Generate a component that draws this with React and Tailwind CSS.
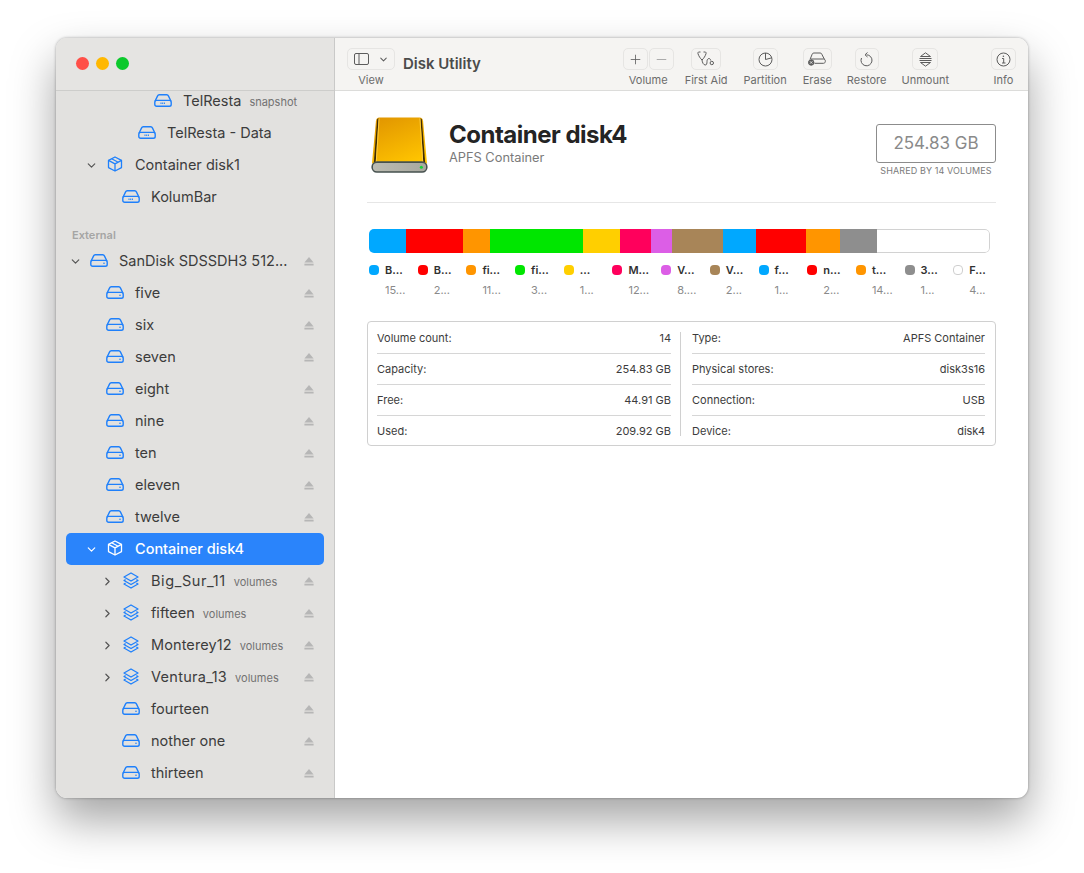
import React from 'react';
import { ChevronDown, ChevronRight, Plus, Minus } from 'lucide-react';

const segments = [
  { width: 'w-[37px]', color: 'bg-[#00a8ff]' },
  { width: 'w-[57px]', color: 'bg-[#ff0000]' },
  { width: 'w-[27px]', color: 'bg-[#ff9500]' },
  { width: 'w-[93px]', color: 'bg-[#00e600]' },
  { width: 'w-[37px]', color: 'bg-[#ffcf00]' },
  { width: 'w-[31px]', color: 'bg-[#ff005c]' },
  { width: 'w-[21px]', color: 'bg-[#dc5ee6]' },
  { width: 'w-[51px]', color: 'bg-[#a88558]' },
  { width: 'w-[33px]', color: 'bg-[#00a8ff]' },
  { width: 'w-[50px]', color: 'bg-[#ff0000]' },
  { width: 'w-[34px]', color: 'bg-[#ff9500]' },
  { width: 'w-[37px]', color: 'bg-[#8e8e8e]' },
];

const legend = [
  { name: 'B...', size: '15...', color: 'bg-[#00a8ff]' },
  { name: 'B...', size: '2...', color: 'bg-[#ff0000]' },
  { name: 'fi...', size: '11...', color: 'bg-[#ff9500]' },
  { name: 'fi...', size: '3...', color: 'bg-[#00e600]' },
  { name: '...', size: '1...', color: 'bg-[#ffcf00]' },
  { name: 'M...', size: '12...', color: 'bg-[#ff005c]' },
  { name: 'V...', size: '8....', color: 'bg-[#dc5ee6]' },
  { name: 'V...', size: '2...', color: 'bg-[#a88558]' },
  { name: 'f...', size: '1...', color: 'bg-[#00a8ff]' },
  { name: 'n...', size: '2...', color: 'bg-[#ff0000]' },
  { name: 't...', size: '14...', color: 'bg-[#ff9500]' },
  { name: '3...', size: '1...', color: 'bg-[#8e8e8e]' },
  { name: 'F...', size: '4...', color: 'bg-white border border-[#cfcfcf]' },
];

const indents = ['pl-0', 'pl-4', 'pl-8', 'pl-12', 'pl-16'];

const stacks = [
  { name: 'Big_Sur_11', tracking: 'tracking-[0.6px]' },
  { name: 'fifteen', tracking: '' },
  { name: 'Monterey12', tracking: 'tracking-[0.1px]' },
  { name: 'Ventura_13', tracking: 'tracking-[0.3px]' },
];

const DriveIcon = () => (
  <svg width="18" height="13" viewBox="0 0 18 13" fill="none" stroke="currentColor" strokeWidth="1.4">
    <path d="M1 7.200 3.600 1.900C3.900 1.200 4.500.8 5.200.8h7.600c.7 0 1.300.4 1.600 1.100L17 7.200" />
    <rect x=".8" y="6.400" width="16.400" height="5.800" rx="1.800" />
    <circle cx="14" cy="9.300" r=".8" fill="currentColor" stroke="none" />
  </svg>
);

const InternalDriveIcon = () => (
  <svg width="18" height="13" viewBox="0 0 18 13" fill="none" stroke="currentColor" strokeWidth="1.4">
    <path d="M1 7.200 3.600 1.900C3.900 1.200 4.500.8 5.200.8h7.600c.7 0 1.300.4 1.600 1.100L17 7.200" />
    <rect x=".8" y="6.400" width="16.400" height="5.800" rx="1.800" />
    <path d="M6.500 9.300h5" strokeWidth="1.600" strokeDasharray="1 .7" />
  </svg>
);

const CubeIcon = () => (
  <svg width="16" height="16" viewBox="0 0 16 16" fill="none" stroke="currentColor" strokeWidth="1.3" strokeLinejoin="round">
    <path d="M8 1 14.500 4.400v7.200L8 15 1.500 11.600V4.400Z" />
    <path d="M1.500 4.400 8 7.900l6.500-3.500M8 7.900V15M4.600 2.800l6.600 3.500" />
  </svg>
);

const StackIcon = () => (
  <svg width="16" height="17" viewBox="0 0 16 17" fill="none" stroke="currentColor" strokeWidth="1.3" strokeLinejoin="round">
    <path d="M8 1 15 5 8 9 1 5Z" />
    <path d="M2.600 7.600 1 8.500l7 4 7-4-1.600-.9" />
    <path d="M2.600 11.100 1 12l7 4 7-4-1.600-.9" />
  </svg>
);

const Eject = ({ className }) => (
  <svg width="10" height="9" viewBox="0 0 10 9" className={className} fill="currentColor">
    <path d="M5 0 9.600 5.400H.4Z" />
    <rect x=".4" y="6.700" width="9.200" height="1.800" />
  </svg>
);

const SideRow = ({ level = 0, chevron, icon, name, note, eject, selected, tracking = '' }) => (
  <div className={`mx-2.5 h-8 flex items-center pr-2.5 rounded-[5px] ${indents[level]} ${selected ? 'bg-[#2a84fb] text-white' : 'text-[#3c3c3c]'}`}>
    <span className={`w-4 ml-px flex justify-center shrink-0 ${selected ? 'text-white' : 'text-[#555]'}`}>
      {chevron === 'down' && <ChevronDown size={13} strokeWidth={2.2} />}
      {chevron === 'right' && <ChevronRight size={13} strokeWidth={2.2} />}
    </span>
    <span className={`w-5 ml-1.5 pb-[2px] flex justify-center shrink-0 ${selected ? 'text-white' : 'text-[#1f80fb]'}`}>{icon}</span>
    <span className={`ml-[10px] pb-[1px] text-[14.500px] whitespace-nowrap ${tracking} ${selected ? 'font-medium' : ''}`}>{name}</span>
    {note && <span className="ml-2 mt-[2px] text-[11px] text-[#727272] whitespace-nowrap">{note}</span>}
    {eject && <Eject className="ml-auto text-[#b6b6b6]" />}
  </div>
);

const ToolBtn = ({ label, className = 'w-[30px]', children, wrap = '' }) => (
  <div className={`flex flex-col items-center ${wrap}`}>
    <div className={`h-[22px] rounded-[5px] border border-[#e6e5e3] flex items-center justify-center text-[#5c5c5c] ${className}`}>
      {children}
    </div>
    <span className="mt-[3px] text-[11px] leading-[14px] text-[#6c6c6c] whitespace-nowrap">{label}</span>
  </div>
);

const InfoRow = ({ label, value, last }) => (
  <div className={`flex items-center justify-between pt-[2px] text-[11px] text-[#3c3c3c] ${last ? 'h-[29px]' : 'h-[31px] border-b border-[#d6d6d6]'}`}>
    <span>{label}</span>
    <span>{value}</span>
  </div>
);

const BigDrive = () => (
  <svg width="57" height="59" viewBox="0 0 60 62" className="shrink-0 ml-px">
    <defs>
      <linearGradient id="amber" x1="0.2" y1="0" x2="0.7" y2="1">
        <stop offset="0" stopColor="#e29700" />
        <stop offset="1" stopColor="#ffc400" />
      </linearGradient>
      <linearGradient id="tray" x1="0" y1="0" x2="1" y2="0">
        <stop offset="0" stopColor="#bcbcb2" />
        <stop offset="1" stopColor="#a8a89f" />
      </linearGradient>
    </defs>
    <path d="M9 1.500h42c2.500 0 3.500 1.500 3.800 4L59 50H1L5.200 5.500C5.500 3 6.500 1.500 9 1.500Z" fill="url(#amber)" />
    <path d="M6.500 3.500 3 49h2L8 2Z" fill="#3d2c05" />
    <path d="M53.500 3.500 57 49h-2L52 2Z" fill="#3d2c05" />
    <path d="M8.500 2.500 5.500 49M51.500 2.500 54.500 49" stroke="#ffd040" strokeWidth="1" fill="none" />
    <rect x="1.200" y="48.500" width="57.600" height="10.500" rx="5" fill="url(#tray)" stroke="#46514f" strokeWidth="1.600" />
    <circle cx="53" cy="54" r="1.600" fill="#16d43a" />
  </svg>
);

const App = () => {
  return (
    <div className="w-[1084px] h-[873px] bg-white overflow-hidden pl-[56px] pt-[38px] font-['Inter','Liberation_Sans',sans-serif]">
      <div className="w-[972px] h-[760px] flex rounded-[11px] overflow-hidden bg-white shadow-[0_22px_45px_rgba(0,0,0,0.36),0_0_3px_rgba(0,0,0,0.35)]">
        <aside className="w-[279px] shrink-0 bg-[#e2e1df] border-r border-[#c9c9c8] flex flex-col">
          <div className="h-[53px] shrink-0 flex items-center gap-[7px] pl-5 pb-[1px] bg-[#e5e4e2] border-b border-[#cdcdcb] relative z-10">
            <span className="w-[13px] h-[13px] rounded-full bg-[#ff4f48]" />
            <span className="w-[13px] h-[13px] rounded-full bg-[#ffb800]" />
            <span className="w-[13px] h-[13px] rounded-full bg-[#0bc92c]" />
          </div>
          <div className="flex-1 overflow-hidden">
            <div className="-mt-[6px]">
              <SideRow level={4} icon={<InternalDriveIcon />} name="TelResta" note="snapshot" />
              <SideRow level={3} icon={<InternalDriveIcon />} name="TelResta - Data" />
              <SideRow level={1} chevron="down" icon={<CubeIcon />} name="Container disk1" />
              <SideRow level={2} icon={<InternalDriveIcon />} name="KolumBar" />
              <div className="h-8 flex items-end pb-[2px] pl-4 text-[11px] font-semibold text-[#a5a5a4]">External</div>
              <SideRow chevron="down" icon={<DriveIcon />} name="SanDisk SDSSDH3 512..." eject />
              {['five', 'six', 'seven', 'eight', 'nine', 'ten', 'eleven', 'twelve'].map((name) => (
                <SideRow key={name} level={1} icon={<DriveIcon />} name={name} eject />
              ))}
              <SideRow level={1} chevron="down" icon={<CubeIcon />} name="Container disk4" selected />
              {stacks.map((s) => (
                <SideRow key={s.name} level={2} chevron="right" icon={<StackIcon />} name={s.name} tracking={s.tracking} note="volumes" eject />
              ))}
              {['fourteen', 'nother one', 'thirteen'].map((name) => (
                <SideRow key={name} level={2} icon={<DriveIcon />} name={name} eject />
              ))}
            </div>
          </div>
        </aside>

        <main className="flex-1 min-w-0 flex flex-col">
          <header className="h-[53px] shrink-0 bg-[#f5f4f2] border-b border-[#dcdcda] flex pl-3 pr-3 pt-[10px]">
            <ToolBtn label="View" className="w-[48px] gap-[9px]">
              <svg width="15" height="12" viewBox="0 0 15 12" fill="none" stroke="currentColor" strokeWidth="1">
                <rect x=".5" y=".5" width="14" height="11" rx="1.500" />
                <path d="M5 .5v11" />
              </svg>
              <ChevronDown size={11} strokeWidth={2.2} />
            </ToolBtn>
            <h1 className="ml-2 mt-[6px] text-[15px] leading-[20px] font-semibold text-[#4b4b4b]">Disk Utility</h1>
            <div className="ml-auto flex flex-col items-center">
              <div className="flex gap-px">
                <div className="w-[25px] h-[22px] rounded-[5px] border border-[#e6e5e3] flex items-center justify-center text-[#5c5c5c]"><Plus size={15} strokeWidth={1.300} /></div>
                <div className="w-[25px] h-[22px] rounded-[5px] border border-[#e6e5e3] flex items-center justify-center text-[#9a9a9a]"><Minus size={15} strokeWidth={1.300} /></div>
              </div>
              <span className="mt-[3px] text-[11px] leading-[14px] text-[#6c6c6c]">Volume</span>
            </div>
            <ToolBtn label="First Aid" wrap="ml-[11px]">
              <svg width="18" height="16" viewBox="0 0 18 16" fill="none" stroke="currentColor" strokeWidth="1">
                <path d="M3.500 1H2C1 1 .7 1.800 1 2.700 1.700 5 3.300 7.500 5 9 6.700 7.500 8.300 5 9 2.700 9.300 1.800 9 1 8 1H6.500" />
                <path d="M5 9c.3 2.500 1.500 5 3.300 5 1.400 0 1.700-1.500 1.700-3.500 0-1.700.8-3 2-3 .9 0 1.500.8 1.700 2" />
                <circle cx="14.800" cy="12" r="1.700" />
              </svg>
            </ToolBtn>
            <ToolBtn label="Partition" wrap="ml-[16px]" className="w-[25px]">
              <svg width="15" height="15" viewBox="0 0 15 15" fill="none" stroke="currentColor" strokeWidth="1">
                <circle cx="7.500" cy="7.500" r="6.500" />
                <path d="M7.500 1v6.500l6-1.600" />
              </svg>
            </ToolBtn>
            <ToolBtn label="Erase" wrap="ml-[16px]" className="w-[29px]">
              <svg width="18" height="14" viewBox="0 0 18 14" fill="none" stroke="currentColor" strokeWidth="1">
                <path d="M2 7.500 4.200 2.200C4.500 1.400 5 1 5.800 1h6.400c.8 0 1.300.4 1.600 1.200L16.500 7.500" />
                <path d="M3 7h12.500c1 0 1.800.8 1.800 1.800v.7c0 1-.8 1.800-1.800 1.800H6.500" />
                <circle cx="3.200" cy="10.500" r="2.700" fill="currentColor" />
                <path d="m2 9.300 2.400 2.400m0-2.400L2 11.700" stroke="#f5f4f2" strokeWidth=".8" />
              </svg>
            </ToolBtn>
            <ToolBtn label="Restore" wrap="ml-[15px]" className="w-[24px]">
              <svg width="13" height="15" viewBox="0 0 13 15" fill="none" stroke="currentColor" strokeWidth="1">
                <path d="M6.500 2.800a5.500 5.500 0 1 1-5 3.200" />
                <path d="M7.500.5 5 2.800l2.500 2.200" />
              </svg>
            </ToolBtn>
            <ToolBtn label="Unmount" wrap="ml-[15px]" className="w-[26px]">
              <svg width="15" height="15" viewBox="0 0 15 15" fill="none" stroke="currentColor" strokeWidth="1" strokeLinejoin="round">
                <path d="M7.500.8 12.500 4.500H2.500Z" />
                <path d="M1.500 6.500h12M1.500 8.500h12" />
                <path d="M7.500 14.200 12.500 10.500H2.500Z" />
              </svg>
            </ToolBtn>
            <ToolBtn label="Info" wrap="ml-[42px]" className="w-[25px]">
              <svg width="15" height="15" viewBox="0 0 15 15" fill="none" stroke="currentColor" strokeWidth="1">
                <circle cx="7.500" cy="7.500" r="6.500" />
                <path d="M6 6.500h1.700V11M6 11h3.500" />
                <circle cx="7.400" cy="4.200" r=".8" fill="currentColor" stroke="none" />
              </svg>
            </ToolBtn>
          </header>

          <div className="flex-1 pl-8 pr-8">
            <div className="h-[112px] flex items-start border-b border-[#e6e6e6] pl-[3px] pt-[25px]">
              <BigDrive />
              <div className="ml-[21px] pt-[4px]">
                <div className="text-[24px] leading-[30px] font-bold tracking-[-0.5px] text-[#242424]">Container disk4</div>
                <div className="text-[12.800px] leading-[16px] text-[#7a7a7a]">APFS Container</div>
              </div>
              <div className="ml-auto pt-[8px] flex flex-col items-center">
                <div className="w-[120px] h-[39px] rounded-[3px] border border-[#8c8c8c] flex items-center justify-center text-[17px] text-[#8a8a8a]">254.83 GB</div>
                <div className="mt-[2px] text-[9px] leading-[12px] tracking-[0.1px] text-[#7b7b7b] whitespace-nowrap">SHARED BY 14 VOLUMES</div>
              </div>
            </div>

            <div className="mt-[26px] ml-[2px] w-[621px] h-6 flex rounded-[5px] overflow-hidden">
              {segments.map((s, i) => (
                <div key={i} className={`h-full shrink-0 ${s.width} ${s.color}`} />
              ))}
              <div className="flex-1 bg-white border border-l-0 border-[#d2d2d2] rounded-r-[5px]" />
            </div>

            <div className="mt-[10px] ml-[2px] w-[640px] flex">
              {legend.map((item, i) => (
                <div key={i} className="w-[48.700px] shrink-0">
                  <div className="flex items-center h-[14px]">
                    <span className={`w-[10px] h-[10px] rounded-[4px] shrink-0 ${item.color}`} />
                    <span className="ml-[6px] text-[11px] font-semibold text-[#303030]">{item.name}</span>
                  </div>
                  <div className="mt-[6px] pl-4 text-[11px] leading-[14px] text-[#8a8a8a]">{item.size}</div>
                </div>
              ))}
            </div>

            <div className="mt-[24px] h-[125px] rounded-[4px] border border-[#d0d0d0] flex items-center px-[9px]">
              <div className="w-[294px]">
                <InfoRow label="Volume count:" value="14" />
                <InfoRow label="Capacity:" value="254.83 GB" />
                <InfoRow label="Free:" value="44.91 GB" />
                <InfoRow label="Used:" value="209.92 GB" last />
              </div>
              <div className="mx-[9px] w-px h-[104px] bg-[#d0d0d0]" />
              <div className="ml-[2px] w-[293px]">
                <InfoRow label="Type:" value="APFS Container" />
                <InfoRow label="Physical stores:" value="disk3s16" />
                <InfoRow label="Connection:" value="USB" />
                <InfoRow label="Device:" value="disk4" last />
              </div>
            </div>
          </div>
        </main>
      </div>
    </div>
  );
};

export default App;
